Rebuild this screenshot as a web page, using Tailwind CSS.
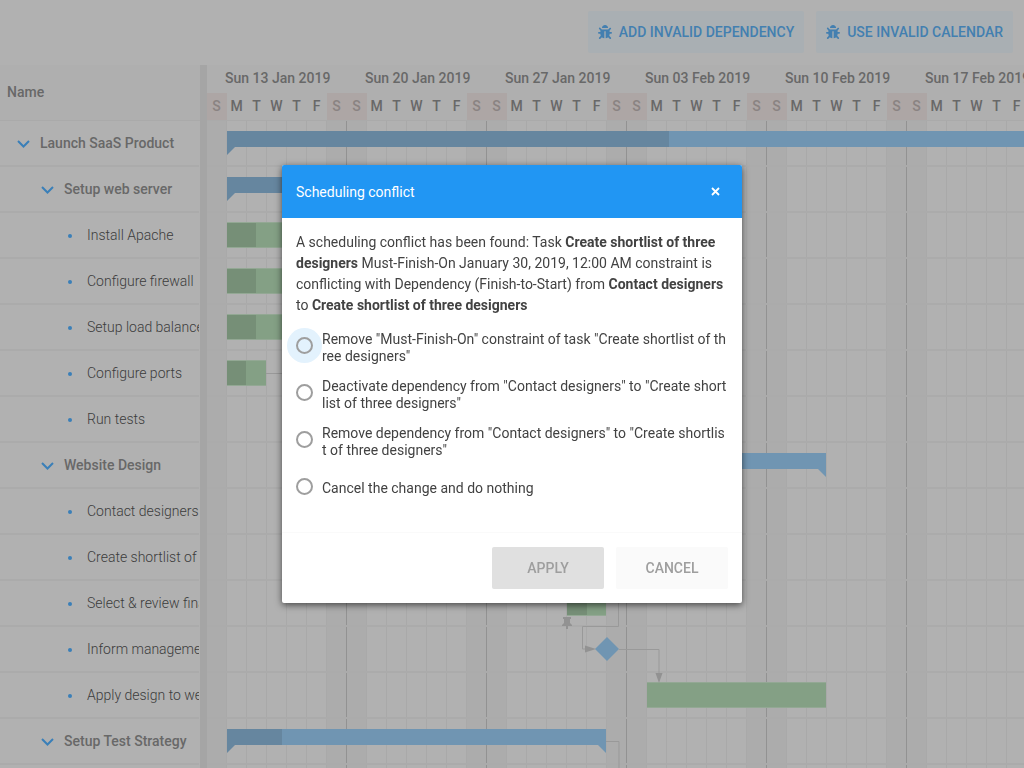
<!DOCTYPE html>
<html lang="en">
<head>
<meta charset="utf-8">
<title>Launch SaaS Product</title>
<script src="https://cdn.jsdelivr.net/npm/@tailwindcss/browser@4"></script>
</head>
<body class="h-screen overflow-hidden bg-[#b1b1b1] font-['Roboto',sans-serif] text-sm text-[#464646]">
<svg class="hidden">
  <symbol id="bug" viewBox="0 0 512 512"><path fill="currentColor" d="M511.988 288.9c-.478 17.43-15.217 31.1-32.653 31.1H424v16c0 21.864-4.882 42.584-13.6 61.145l60.228 60.228c12.496 12.497 12.496 32.758 0 45.255-12.498 12.497-32.759 12.496-45.256 0l-54.736-54.736C345.886 467.965 314.351 480 280 480V236c0-6.627-5.373-12-12-12h-24c-6.627 0-12 5.373-12 12v244c-34.351 0-65.886-12.035-90.636-32.108l-54.736 54.736c-12.498 12.497-32.759 12.496-45.256 0-12.496-12.497-12.496-32.758 0-45.255l60.228-60.228C92.882 378.584 88 357.864 88 336v-16H32.666C15.23 320 .491 306.33.013 288.9-.484 270.816 14.028 256 32 256h56v-58.745l-46.628-46.628c-12.496-12.497-12.496-32.758 0-45.255 12.498-12.497 32.758-12.497 45.256 0L141.255 160h229.489l54.627-54.627c12.498-12.497 32.758-12.497 45.256 0 12.496 12.497 12.496 32.758 0 45.255L424 197.255V256h56c17.972 0 32.484 14.816 31.988 32.9zM257 0c-61.856 0-112 50.144-112 112h224C369 50.144 318.856 0 257 0z"/></symbol>
  <symbol id="chev" viewBox="0 0 14 10"><path d="M1 2 6.500 7.5 12 2" fill="none" stroke="#3a7fb8" stroke-width="2"/></symbol>
</svg>
<div class="flex h-full flex-col">
  <header class="flex h-[65px] shrink-0 items-start justify-end gap-3 px-[11px] pt-[11px]">
    <button class="flex h-[42px] items-center gap-[7px] rounded-xs bg-[#a9afb3] px-[10px] font-medium text-[#437fb0]"><svg class="size-[14px]"><use href="#bug"/></svg>ADD INVALID DEPENDENCY</button>
    <button class="flex h-[42px] items-center gap-[7px] rounded-xs bg-[#a9afb3] px-[10px] font-medium text-[#437fb0]"><svg class="size-[14px]"><use href="#bug"/></svg>USE INVALID CALENDAR</button>
  </header>
  <main class="flex min-h-0 flex-1">
    <section class="flex w-[200px] shrink-0 flex-col overflow-hidden">
      <div class="flex h-14 shrink-0 items-center border-b border-[#aaaaaa] bg-[#afafaf] pb-[2px] pl-[7px] font-medium text-[#686868]">Name</div>
      <ul id="names" class="mr-px overflow-hidden whitespace-nowrap"></ul>
    </section>
    <div class="w-[7px] shrink-0 bg-[#a5a5a5]"></div>
    <section class="flex min-w-0 flex-1 flex-col overflow-hidden">
      <div class="h-14 shrink-0 border-b border-[#aaaaaa] bg-[#afafaf] font-medium text-[#686868]">
        <div id="weeks" class="flex h-7 items-center pb-[2px] pl-[18px] whitespace-nowrap"></div>
        <div id="days" class="flex h-[27px]"></div>
      </div>
      <div class="relative flex-1 overflow-hidden">
        <div id="cols" class="absolute inset-0 flex"></div>
        <div id="lines" class="absolute inset-0"></div>
        <svg class="absolute inset-0 h-full w-full" fill="none">
          <g transform="translate(-207 -121)">
            <g fill="#7095b2">
              <path fill="#66869f" d="M227 131h442v16H235l-8 8z"/><path d="M669 131h400v16H669z"/>
              <path fill="#66869f" d="M227 177h80v16H235l-8 8z"/>
              <path d="M700 453h126v24l-8-8H700z"/>
              <path d="M282 729h324v24l-8-8H282z"/><path fill="#66869f" d="M227 729h55v16H235l-8 8z"/>
            </g>
            <g fill="#84a085">
              <path d="M227 223h80v24h-80zM227 269h80v24h-80zM227 315h80v24h-80zM227 361h39v24h-39zM567 591h39v24h-39zM647 683h179v24H647z"/>
              <path fill="#768f77" d="M227 223h29v24h-29zM227 269h29v24h-29zM227 315h29v24h-29zM227 361h19v24h-19zM567 591h20v24h-20z"/>
              <path stroke="#93a894" d="M227 222.5h80M227 247.500h80M227 268.500h80M227 293.500h80M227 314.500h80M227 339.500h80M227 360.500h39M227 385.500h39M567 615.500h39M647 682.500h179M647 707.500h179"/>
            </g>
            <g stroke="#999999">
              <path d="M266 373.500h20M618.500 600v26.500h-36v22.500h5M619 649.500h40v24M606 741.500h13v40"/>
            </g>
            <path fill="#929292" d="M585 645.500l11 3.500-11 3.500zM655.500 673h7l-3.500 10zM563 617h8v2h-1v4l2 2v1h-4v3h-2v-3h-4v-1l2-2v-4h-1z"/>
            <path fill="#7095b2" d="M607 637l12 12-12 12-12-12z"/>
          </g>
        </svg>
      </div>
    </section>
  </main>
</div>

<div class="fixed inset-0 flex items-center justify-center p-4">
  <form role="dialog" aria-labelledby="title" class="w-full max-w-[460px] overflow-hidden rounded-xs bg-white text-[#424242] shadow-[0_2px_7px_rgba(0,0,0,0.6)]">
    <div class="flex h-[53px] items-center justify-between bg-[#2196f3] pr-[22px] pl-[14px] text-white">
      <h1 id="title">Scheduling conflict</h1>
      <button type="button" aria-label="Close"><svg class="size-[9px]" viewBox="0 0 9 9"><path d="M1 1l7 7M8 1L1 8" stroke="#fff" stroke-width="1.800"/></svg></button>
    </div>
    <div class="px-[14px] pt-[14px] pb-[22px]">
      <p class="leading-[21px]">A scheduling conflict has been found: Task <b>Create shortlist of three designers</b> Must-Finish-On January 30, 2019, 12:00 AM constraint is conflicting with Dependency (Finish-to-Start) from <b>Contact designers</b> to <b>Create shortlist of three designers</b></p>
      <div id="choices" class="mt-[6px] leading-[17px] break-all"></div>
    </div>
    <div class="flex justify-end gap-3 border-t border-[#fafafa] px-[14px] py-[14px] font-medium text-[#9e9e9e]">
      <button type="button" disabled class="h-[42px] w-28 rounded-xs bg-[#e0e0e0]">APPLY</button>
      <button type="button" class="h-[42px] w-28 rounded-xs bg-[#fafafa]">CANCEL</button>
    </div>
  </form>
</div>
<script>
const $ = id => document.getElementById(id);
const tasks = [[0,'Launch SaaS Product'],[1,'Setup web server'],[2,'Install Apache'],[2,'Configure firewall'],[2,'Setup load balancer'],[2,'Configure ports'],[2,'Run tests'],[1,'Website Design'],[2,'Contact designers'],[2,'Create shortlist of three designers'],[2,'Select & review final design'],[2,'Inform management about decision'],[2,'Apply design to web site'],[1,'Setup Test Strategy'],[2,'']];
const chev = '<svg class="mt-[2px] h-[10px] w-[14px] shrink-0"><use href="#chev"/></svg>';
const dot = '<span class="mt-[2px] size-1 shrink-0 rounded-full bg-[#3a7fb8]"></span>';
const kinds = [['pl-[17px] gap-[9px] font-medium text-[#686868]', chev],['pl-[41px] gap-[9px] font-medium text-[#686868]', chev],['pl-[68px] gap-[15px] font-light text-[#3c3c3c]', dot]];
tasks.forEach(([k, name]) => {
  const li = document.createElement('li');
  li.className = 'flex h-[46px] items-center border-b-2 border-[#ababab] ' + kinds[k][0];
  li.innerHTML = name ? kinds[k][1] + '<span></span>' : '';
  if (name) li.lastChild.textContent = name;
  $('names').append(li);
  $('lines').insertAdjacentHTML('beforeend', '<div class="h-[46px] border-b-2 border-[#ababab]"></div>');
});
['13 Jan','20 Jan','27 Jan','03 Feb','10 Feb','17 Feb'].forEach(d => $('weeks').insertAdjacentHTML('beforeend', `<span class="w-[140px] shrink-0">Sun ${d} 2019</span>`));
for (let i = 0; i < 42; i++) {
  const d = i % 7, off = d === 0 || d === 6;
  $('days').insertAdjacentHTML('beforeend', `<span class="flex w-5 shrink-0 items-center justify-center pr-px pb-[2px] ${off ? 'bg-[#ada6a5] text-[#8a8382]' : ''}">${'SMTWTFS'[d]}</span>`);
  $('cols').insertAdjacentHTML('beforeend', `<div class="w-5 shrink-0 border-r ${d === 6 ? 'border-[#929292]' : 'border-[#a9a9a9]'} ${off ? 'bg-[#acacac]' : ''}"></div>`);
}
['Remove "Must-Finish-On" constraint of task "Create shortlist of three designers"','Deactivate dependency from "Contact designers" to "Create shortlist of three designers"','Remove dependency from "Contact designers" to "Create shortlist of three designers"','Cancel the change and do nothing'].forEach((text, i) => {
  $('choices').insertAdjacentHTML('beforeend', `<label class="flex h-[47px] items-center gap-[9px]"><input type="radio" name="fix" class="size-[17px] shrink-0 appearance-none rounded-full border-2 border-[#9e9e9e] ${i ? '' : 'bg-[#e3f2fd] shadow-[0_0_0_9px_#e3f2fd]'}"><span class="z-10 pt-1"></span></label>`);
  $('choices').lastChild.lastChild.textContent = text;
});
</script>
</body>
</html>
